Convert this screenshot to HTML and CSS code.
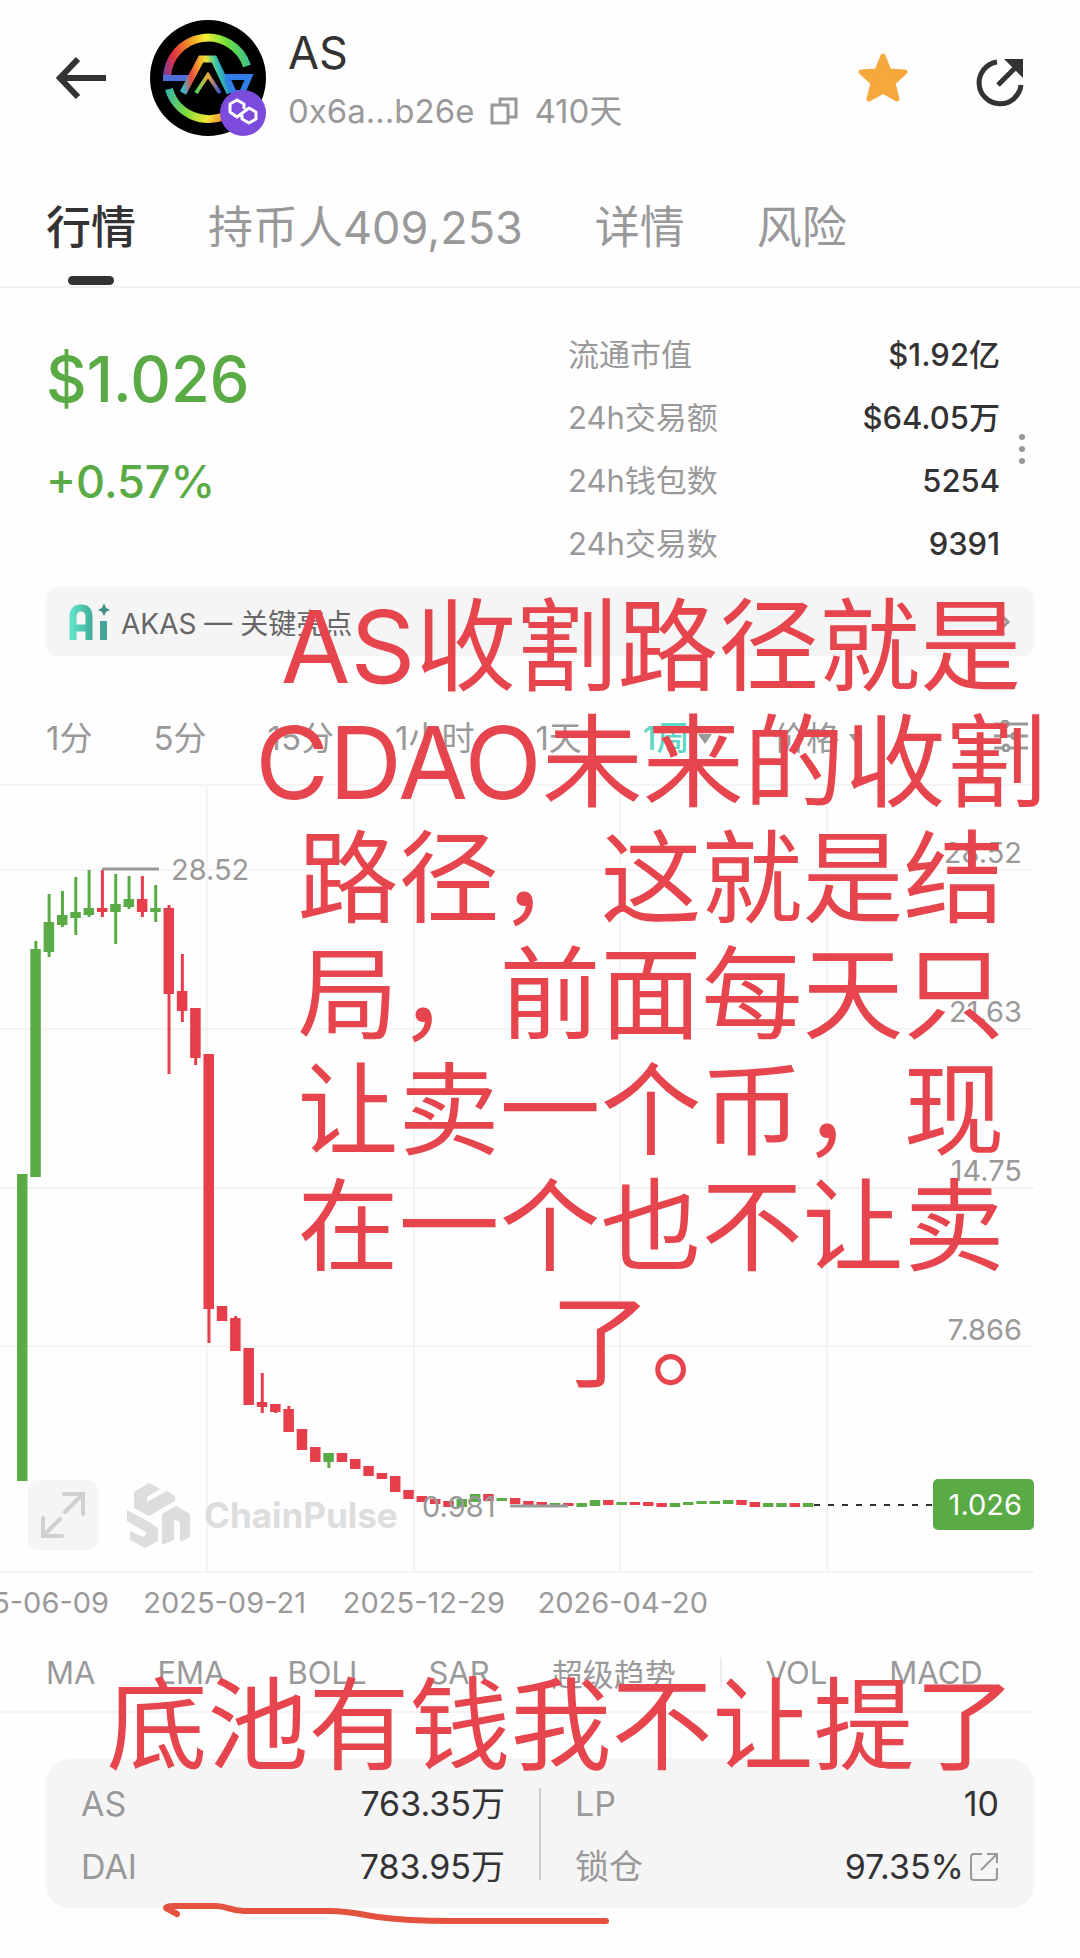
FILE: index.html
```html
<!DOCTYPE html>
<html lang="zh-CN">
<head>
    <meta charset="UTF-8">
    <meta name="viewport" content="width=device-width, initial-scale=1.0">
    <title>AS 行情</title>
    <link rel="stylesheet" href="styles.css">
</head>
<body>
    <header>
        <button class="back" aria-label="返回">
            <svg width="52" height="44" viewBox="0 0 52 44" fill="none" stroke="#333" stroke-width="6">
                <path d="M22 3L4 22L22 41M4 22H50"/>
            </svg>
        </button>
        <svg class="avatar" width="116" height="116" viewBox="0 0 116 116" fill="none">
            <defs>
                <linearGradient id="ringTop" x1="13" y1="60" x2="99" y2="40" gradientUnits="userSpaceOnUse">
                    <stop offset="0" stop-color="#6b3fae"/>
                    <stop offset=".18" stop-color="#e0323c"/>
                    <stop offset=".4" stop-color="#f59a26"/>
                    <stop offset=".58" stop-color="#f3ee35"/>
                    <stop offset=".8" stop-color="#6fdc3c"/>
                    <stop offset="1" stop-color="#3cc48c"/>
                </linearGradient>
                <linearGradient id="ringBottom" x1="16" y1="70" x2="80" y2="98" gradientUnits="userSpaceOnUse">
                    <stop offset="0" stop-color="#35b5a8"/>
                    <stop offset=".4" stop-color="#7edb3c"/>
                    <stop offset=".7" stop-color="#f1e637"/>
                    <stop offset="1" stop-color="#f0682c"/>
                </linearGradient>
                <linearGradient id="peak" x1="34" y1="72" x2="82" y2="64" gradientUnits="userSpaceOnUse">
                    <stop offset="0" stop-color="#3fb6c4"/>
                    <stop offset=".2" stop-color="#e8493a"/>
                    <stop offset=".4" stop-color="#f5a22c"/>
                    <stop offset=".56" stop-color="#e6e43a"/>
                    <stop offset=".75" stop-color="#37c8a8"/>
                    <stop offset="1" stop-color="#2f6fe0"/>
                </linearGradient>
                <linearGradient id="inner" x1="46" y1="72" x2="70" y2="72" gradientUnits="userSpaceOnUse">
                    <stop offset="0" stop-color="#47d05a"/>
                    <stop offset=".5" stop-color="#f0a838"/>
                    <stop offset="1" stop-color="#3a4fd0"/>
                </linearGradient>
            </defs>
            <circle cx="58" cy="58" r="58" fill="#000"/>
            <path d="M17 58A41 41 0 0 1 97 46" stroke="url(#ringTop)" stroke-width="8"/>
            <path d="M19 69A41 41 0 0 0 78 94" stroke="url(#ringBottom)" stroke-width="8"/>
            <path d="M13 58H40" stroke="#4f6fd8" stroke-width="6"/>
            <path d="M33 73L51 39H64L80 73" stroke="url(#peak)" stroke-width="7"/>
            <path d="M46 73L58 55L70 73" stroke="url(#inner)" stroke-width="4"/>
            <path d="M75 57H99L92 73H84L77 58" stroke="#2f7fe6" stroke-width="6"/>
            <circle cx="93" cy="93" r="23" fill="#7b4bdc"/>
            <path d="M94 89V84L87 80L80 84V92L87 97L99 88L106 92V99L99 103L92 99V95" stroke="#fff" stroke-width="3" stroke-linejoin="round"/>
        </svg>
        <div class="token">
            <h1>AS</h1>
            <p>0x6a...b26e
                <svg width="28" height="28" viewBox="0 0 28 28" fill="none" stroke="#999" stroke-width="3">
                    <path d="M2 8H18V26H2ZM10 8V2H26V20H18"/>
                </svg>
                410天</p>
        </div>
        <button class="star" aria-label="收藏">
            <svg width="54" height="54" viewBox="0 0 54 54">
                <path d="M27 5L33 20L49 21L37 32L41 48L27 40L13 48L17 32L5 21L21 20Z" fill="#f5a83c" stroke="#f5a83c" stroke-width="5" stroke-linejoin="round"/>
            </svg>
        </button>
        <button class="share" aria-label="分享">
            <svg width="48" height="48" viewBox="0 0 48 48" fill="none" stroke="#333" stroke-width="5">
                <path d="M21 3A21 21 0 1 0 45 26M22 26L39 9"/>
                <path d="M28 0H47V19Z" fill="#333" stroke="none"/>
            </svg>
        </button>
    </header>
    <nav class="tabs">
        <a href="#market" class="active">行情</a>
        <a href="#holders">持币人409,253</a>
        <a href="#detail">详情</a>
        <a href="#risk">风险</a>
    </nav>

    <section class="summary" id="market">
        <div class="price">
            <p class="now">$1.026</p>
            <p class="change">+0.57%</p>
        </div>
        <dl>
            <div><dt>流通市值</dt><dd>$1.92亿</dd></div>
            <div><dt>24h交易额</dt><dd>$64.05万</dd></div>
            <div><dt>24h钱包数</dt><dd>5254</dd></div>
            <div><dt>24h交易数</dt><dd>9391</dd></div>
        </dl>
        <button class="more" aria-label="更多">
            <svg width="8" height="32" viewBox="0 0 8 32" fill="#999">
                <circle cx="4" cy="4" r="3"/><circle cx="4" cy="16" r="3"/><circle cx="4" cy="28" r="3"/>
            </svg>
        </button>
    </section>

    <main>
        <a href="#ai" class="ai">
            <svg width="42" height="40" viewBox="0 0 42 40" fill="none">
                <defs>
                    <linearGradient id="teal" x1="0" y1="0" x2="1" y2="0">
                        <stop offset="0" stop-color="#5ee0c4"/>
                        <stop offset="1" stop-color="#45b3a0"/>
                    </linearGradient>
                </defs>
                <path d="M4 38V15Q4 6 12 6Q20 6 20 15V38M4 26H20" stroke="url(#teal)" stroke-width="7"/>
                <path d="M31 19H38V38H31Z" fill="#45a496"/>
                <path d="M35 1L37 6L41 8L37 10L35 14L33 10L29 8L33 6Z" fill="#3f8f86"/>
            </svg>
            <span>AKAS — 关键亮点</span>
            <svg class="chevron" width="12" height="18" viewBox="0 0 12 18" fill="none" stroke="#999" stroke-width="3">
                <path d="M2 2L9 9L2 16"/>
            </svg>
        </a>

        <div class="periods">
            <button>1分</button>
            <button>5分</button>
            <button>15分</button>
            <button>1小时</button>
            <button>1天</button>
            <button class="active">1周 <i class="caret"></i></button>
            <button class="kind">价格 <i class="caret"></i></button>
            <button class="settings" aria-label="设置">
                <svg width="34" height="32" viewBox="0 0 34 32" fill="none" stroke="#999" stroke-width="3">
                    <path d="M0 4H7M15 4H34M0 16H17M25 16H34M0 28H8M16 28H34"/>
                    <circle cx="11" cy="4" r="3"/><circle cx="21" cy="16" r="3"/><circle cx="12" cy="28" r="3"/>
                </svg>
            </button>
        </div>

        <div class="chart">
            <svg viewBox="0 0 1080 850">
                <g class="grid">
                    <path d="M0 1H1034M0 86H1034M0 245H1034M0 404H1034M0 562H1034M0 788H1034"/>
                    <path d="M207 0V788M414 0V788M620 0V788M827 0V788"/>
                </g>
                <g class="watermark">
                    <path d="M134 708L149 699L160 705L147 713V718L167 707L175 712V717L149 732L134 724Z"/>
                    <path d="M127 726L149 738L158 744V757L145 764L130 756V747L143 753L146 751V748L127 737Z"/>
                    <path d="M162 730L176 722L190 730V753L180 758V738L174 735V756L162 761Z"/>
                    <text x="204" y="744">ChainPulse</text>
                </g>
                <g id="candles"></g>
                <path class="mark" d="M102 85H159M510 722H568"/>
                <g class="axis">
                    <text x="171" y="96">28.52</text>
                    <text x="422" y="733">0.981</text>
                    <g text-anchor="end">
                        <text x="1022" y="79">28.52</text>
                        <text x="1022" y="238">21.63</text>
                        <text x="1022" y="397">14.75</text>
                        <text x="1022" y="556">7.866</text>
                        <text x="109" y="829">2025-06-09</text>
                        <text x="306" y="829">2025-09-21</text>
                        <text x="505" y="829">2025-12-29</text>
                        <text x="708" y="829">2026-04-20</text>
                    </g>
                </g>
                <path class="last" d="M814 721H933"/>
                <rect x="933" y="695" width="101" height="51" rx="5" fill="#5aab46"/>
                <text class="tag" x="1022" y="731" text-anchor="end">1.026</text>
            </svg>
            <button class="expand" aria-label="全屏">
                <svg width="46" height="48" viewBox="0 0 46 48" fill="none" stroke="#d0d0d0" stroke-width="4" stroke-linecap="round">
                    <path d="M25 21L42 4M24 3H43V23M20 28L4 44M3 27V45H22"/>
                </svg>
            </button>
        </div>

        <div class="indicators">
            <button>MA</button>
            <button>EMA</button>
            <button>BOLL</button>
            <button>SAR</button>
            <button>超级趋势</button>
            <i class="divider"></i>
            <button>VOL</button>
            <button>MACD</button>
        </div>

        <p class="note">AS收割路径就是<br>CDAO未来的收割<br>路径，这就是结<br>局，前面每天只<br>让卖一个币，现<br>在一个也不让卖<br>了。</p>
    </main>

    <section class="pool">
        <dl>
            <div><dt>AS</dt><dd>763.35万</dd></div>
            <div><dt>DAI</dt><dd>783.95万</dd></div>
        </dl>
        <dl>
            <div><dt>LP</dt><dd>10</dd></div>
            <div><dt>锁仓</dt><dd>97.35%
                <svg width="30" height="30" viewBox="0 0 30 30" fill="none" stroke="#999" stroke-width="2">
                    <path d="M13 2H5Q2 2 2 5V25Q2 28 5 28H25Q28 28 28 25V16M12 18L28 2M18 2H28V11"/>
                </svg></dd></div>
        </dl>
        <p class="note">底池有钱我不让提了</p>
        <svg class="stroke" width="450" height="24" viewBox="0 0 450 24" fill="none">
            <path d="M17 12L6 6Q6 4 14 4H56C68 4 70 9 84 9H170C190 9 204 13 218 15C240 18 262 19 290 19H446"/>
        </svg>
    </section>

    <script>
        const candles = document.querySelector("#candles");

        // colour, body top, body bottom, wick top, wick bottom
        const data = [
            ["g", 390, 697], ["g", 165, 393, 157], ["g", 138, 168, 110, 173], ["g", 131, 141, 107, 143],
            ["g", 128, 134, 93, 151], ["g", 124, 131, 86, 133], ["r", 124, 128, 86, 133], ["g", 120, 128, 90, 160],
            ["g", 115, 123, 92, 125], ["r", 115, 128, 92, 133], ["g", 124, 128, 101, 138], ["r", 124, 210, 121, 290],
            ["r", 207, 227, 170, 238], ["r", 224, 274, 224, 281], ["r", 270, 525, 270, 559], ["r", 522, 537],
            ["r", 534, 567, 532], ["r", 564, 621], ["r", 618, 623, 589, 629], ["r", 620, 628, 620, 629],
            ["r", 625, 648, 622], ["r", 645, 666], ["r", 663, 678], ["g", 669, 678, 669, 684],
            ["r", 669, 678], ["r", 675, 685], ["r", 682, 692], ["r", 689, 695],
            ["r", 692, 708], ["r", 706, 715], ["r", 712, 718], ["r", 715, 720],
            ["r", 717, 723], ["g", 715, 723], ["g", 710, 718], ["r", 710, 717],
            ["g", 714, 717], ["r", 714, 720], ["r", 717, 721], ["r", 718, 721],
            ["g", 719, 722], ["r", 719, 722], ["g", 719, 723], ["g", 716, 722],
            ["r", 716, 721], ["g", 718, 721], ["r", 718, 721], ["r", 718, 722],
            ["r", 719, 723], ["g", 719, 723], ["g", 718, 721], ["g", 717, 720],
            ["g", 717, 720], ["g", 716, 720], ["r", 716, 721], ["r", 718, 723],
            ["g", 719, 723], ["g", 719, 723], ["r", 719, 723], ["g", 719, 723]
        ];

        data.forEach(([colour, top, bottom, high = top, low = bottom], i) => {
            const x = 22 + i * 13.32;
            candles.innerHTML += `<path class="${colour}" d="M${x - 5} ${top}h10.5V${bottom}h-10.5ZM${x - 1} ${high}h3V${low}h-3Z"/>`;
        });
    </script>
</body>
</html>
```
FILE: styles.css
```css
* {
    box-sizing: border-box;
}

body {
    margin: 0;
    background-color: #fefefe;
    color: #333;
    font-family: Inter, "Noto Sans CJK SC", sans-serif;
    font-size: 31px;
    overflow-x: hidden;
}

h1, p, dl, dd {
    margin: 0;
}

a {
    color: inherit;
    text-decoration: none;
}

button {
    padding: 0;
    border: 0;
    background: none;
    color: inherit;
    font: inherit;
    white-space: nowrap;
}

svg {
    display: block;
}

/* header */
header {
    display: flex;
    align-items: center;
    padding: 20px 56px 0;
}

.avatar {
    margin: 0 22px 0 42px;
}

.token {
    flex: 1;
}

.token h1 {
    font-size: 45px;
    font-weight: 400;
    line-height: 66px;
}

.token p {
    display: flex;
    align-items: center;
    gap: 16px;
    color: #999;
    font-size: 33px;
    line-height: 50px;
}

.star {
    margin-right: 66px;
}

.share {
    padding-top: 10px;
}

/* tabs */
.tabs {
    display: flex;
    gap: 72px;
    padding: 62px 46px 28px;
    border-bottom: 2px solid #f1f1f1;
    color: #999;
    font-size: 45px;
    line-height: 60px;
}

.tabs a {
    position: relative;
}

.tabs .active {
    color: #333;
    font-weight: 500;
}

.tabs .active::after {
    content: "";
    position: absolute;
    left: 50%;
    bottom: -27px;
    width: 46px;
    height: 9px;
    margin-left: -23px;
    border-radius: 5px;
    background-color: #333;
}

/* price and stats */
.summary {
    display: flex;
    padding: 35px 36px 12px 46px;
}

.price {
    flex: 1;
    color: #5aab46;
    font-weight: 500;
}

.now {
    font-size: 63px;
    line-height: 112px;
}

.change {
    font-size: 45px;
    line-height: 94px;
}

dl div {
    display: flex;
    justify-content: space-between;
    line-height: 63px;
}

dt {
    color: #999;
}

.summary dl {
    width: 432px;
}

.summary dd {
    font-weight: 500;
}

.more {
    display: flex;
    justify-content: center;
    align-items: center;
    width: 44px;
    height: 252px;
}

/* AI highlights */
main {
    position: relative;
}

.ai {
    display: flex;
    align-items: center;
    gap: 10px;
    height: 69px;
    margin: 0 46px;
    padding: 0 23px;
    border-radius: 12px;
    background-color: #f5f5f5;
    color: #666;
    font-size: 28px;
}

.chevron {
    margin-left: auto;
}

/* period picker */
.periods {
    display: flex;
    align-items: center;
    gap: 61px;
    height: 128px;
    padding: 32px 52px 0 46px;
    color: #999;
    font-size: 33px;
}

.periods .active {
    color: #5ed8c4;
    font-weight: 500;
}

.caret {
    display: inline-block;
    border: 7px solid transparent;
    border-top: 10px solid #999;
    border-bottom: 0;
    vertical-align: 6px;
}

.settings {
    margin-left: auto;
}

/* chart */
.chart {
    position: relative;
}

.chart > svg {
    width: 100%;
}

.grid {
    fill: none;
    stroke: #f4f4f4;
    stroke-width: 2;
}

.axis {
    fill: #999;
    font-size: 29px;
}

.tag {
    fill: #fff;
    font-size: 29px;
}

.mark {
    stroke: #999;
    stroke-width: 3;
}

.last {
    stroke: #333;
    stroke-width: 2;
    stroke-dasharray: 6 8;
}

.g {
    fill: #5aab46;
}

.r {
    fill: #e63e4b;
}

.watermark {
    fill: #ddd;
    font-size: 35px;
    font-weight: 700;
}

.expand {
    position: absolute;
    left: 28px;
    bottom: 84px;
    width: 70px;
    height: 70px;
    padding: 0 12px;
    border-radius: 10px;
    background-color: #f5f5f5;
}

/* indicators */
.indicators {
    display: flex;
    align-items: center;
    gap: 62px;
    height: 79px;
    margin-right: 46px;
    padding-left: 46px;
    border-bottom: 2px solid #f4f4f4;
    color: #999;
}

.divider {
    width: 2px;
    height: 32px;
    margin: 0 -18px;
    background-color: #eee;
}

/* pool */
.pool {
    position: relative;
    display: flex;
    margin: 46px 46px 50px;
    padding: 13px 35px 10px;
    border-radius: 24px;
    background-color: #f5f5f5;
    font-size: 34px;
}

.pool dl {
    flex: 1;
    padding-right: 36px;
}

.pool dl + dl {
    padding: 0 0 0 34px;
}

.pool dl + dl::before {
    content: "";
    position: absolute;
    left: 50%;
    top: 29px;
    width: 2px;
    height: 92px;
    margin-left: -1px;
    background-color: #ccc;
}

.pool dd {
    display: flex;
    align-items: center;
    gap: 5px;
}

/* notes written over the page */
.note {
    position: absolute;
    top: 1px;
    left: 222px;
    right: 0;
    color: #e6454d;
    font-size: 101px;
    line-height: 116px;
    text-align: center;
    white-space: nowrap;
}

.pool .note {
    top: -92px;
    left: 42px;
}

.stroke {
    position: absolute;
    left: 114px;
    bottom: -18px;
    stroke: #e2523f;
    stroke-width: 6;
    stroke-linecap: round;
    stroke-linejoin: round;
}
```
